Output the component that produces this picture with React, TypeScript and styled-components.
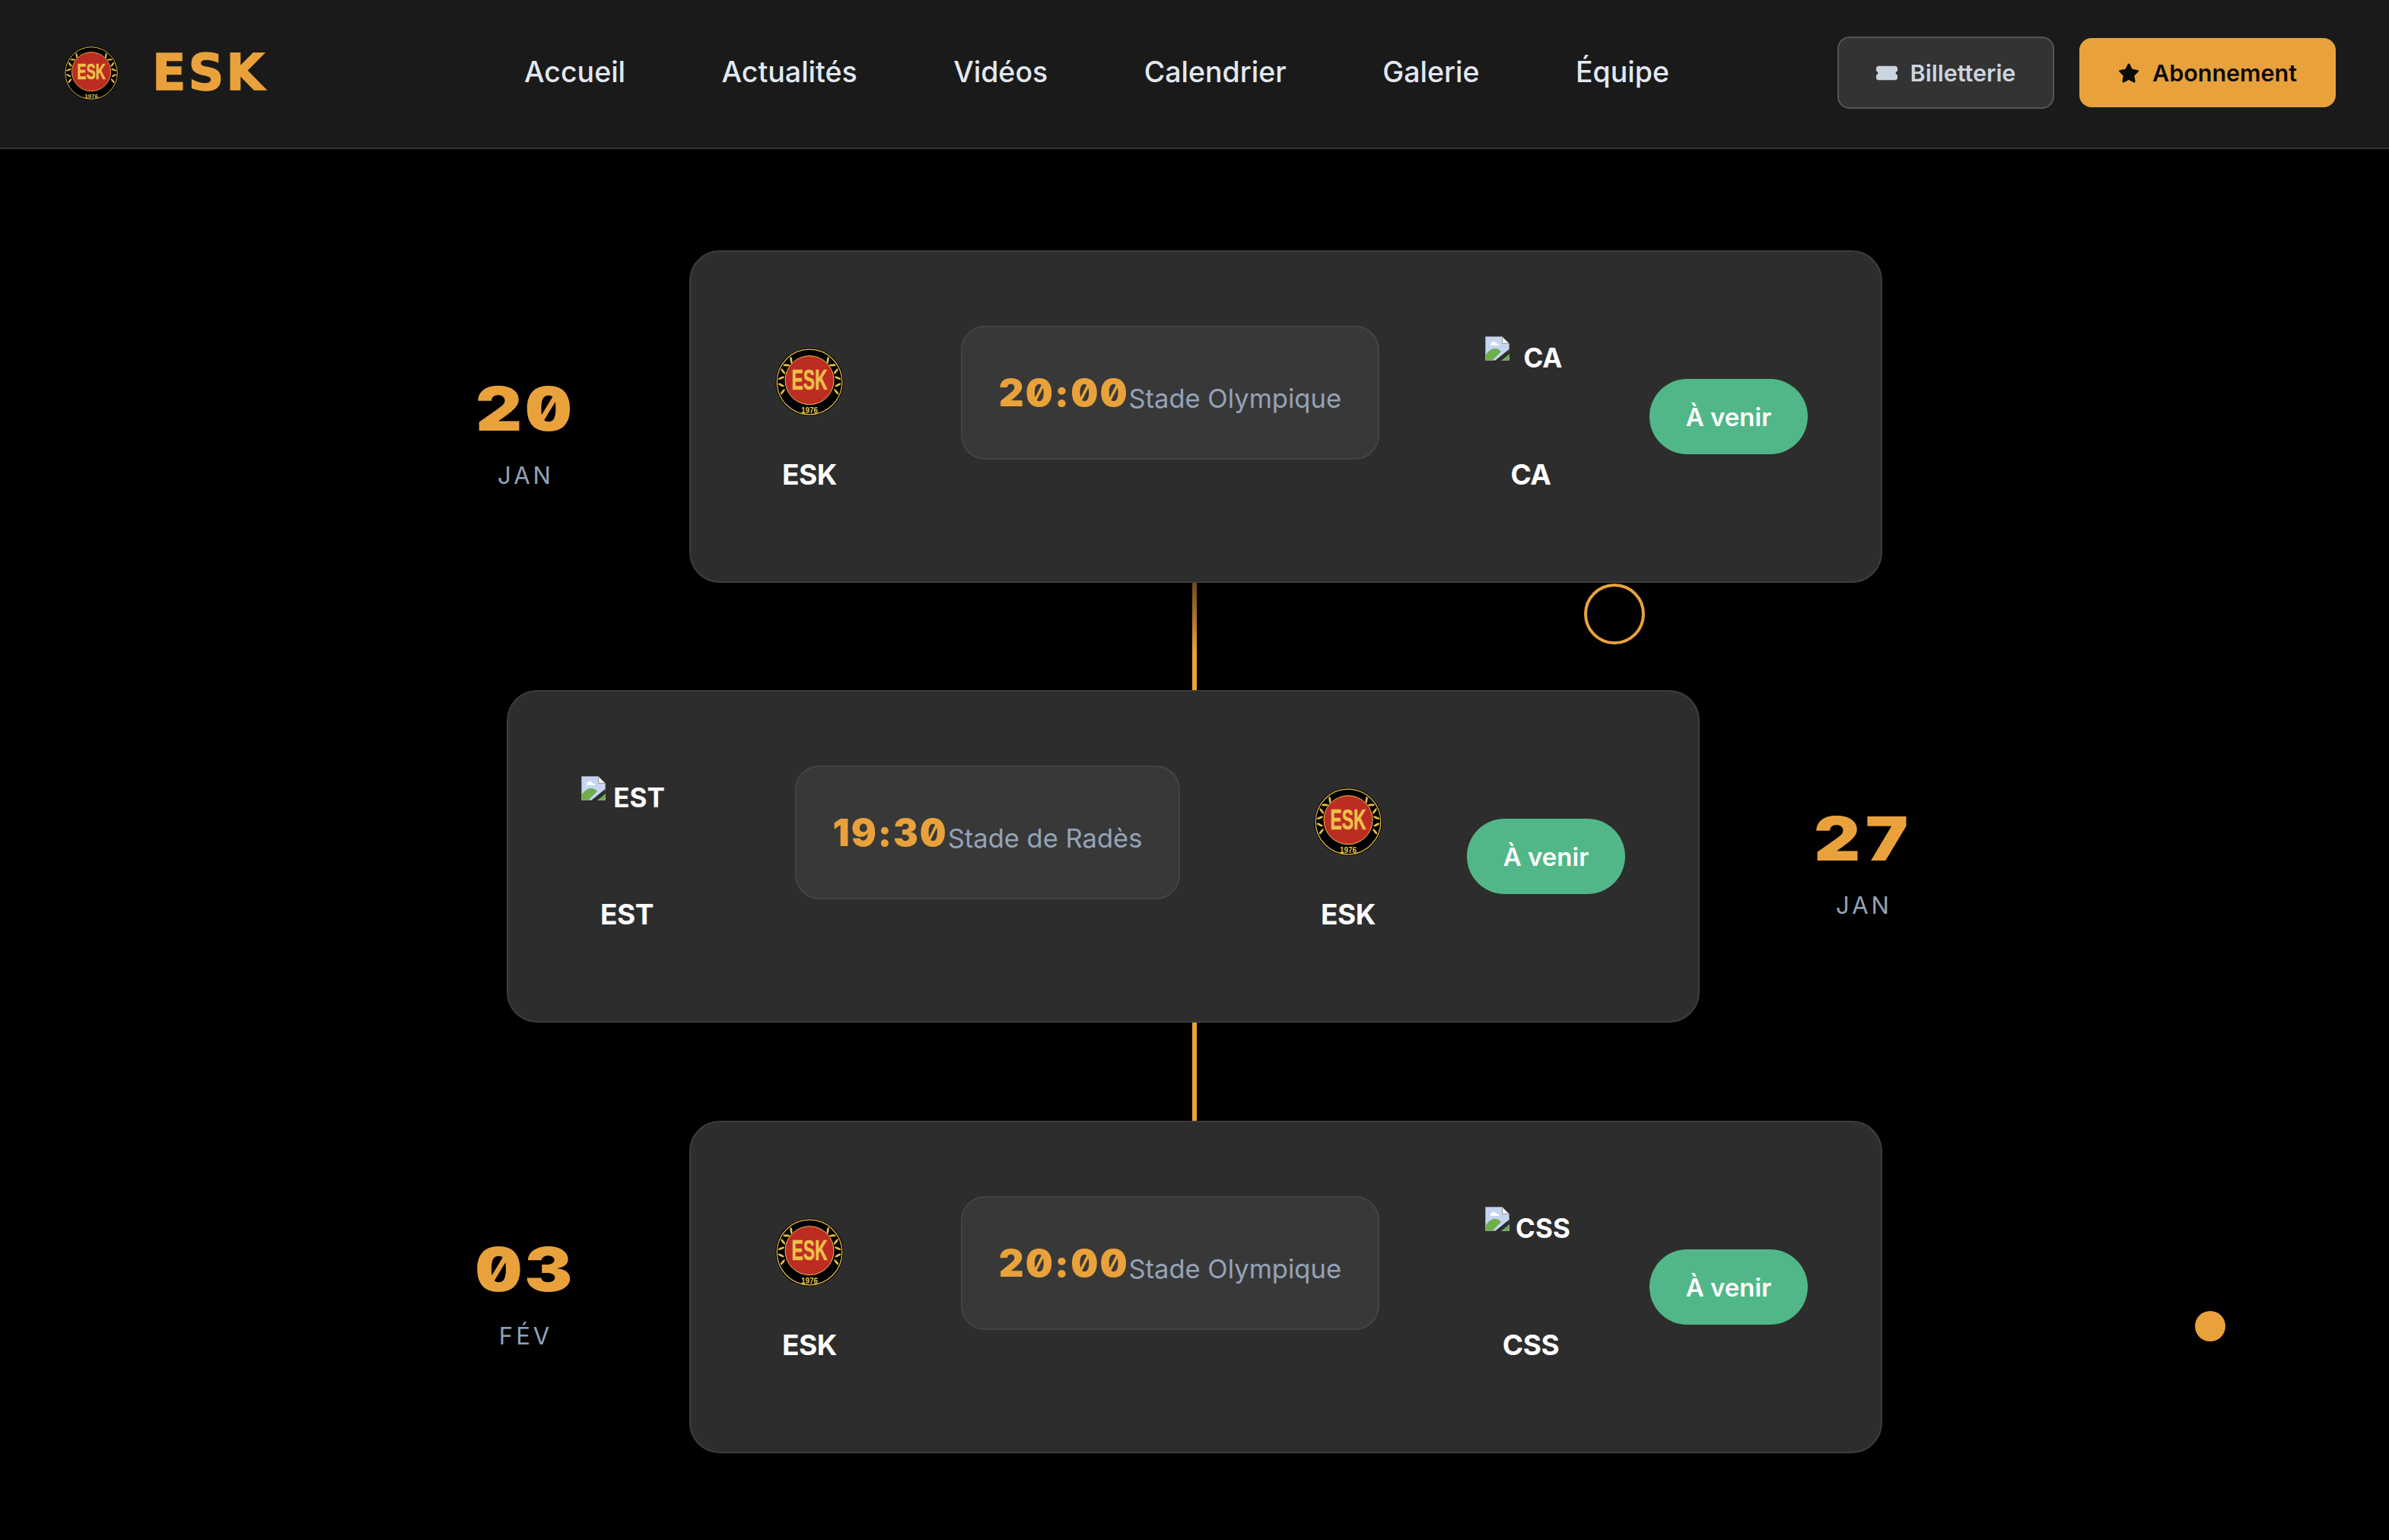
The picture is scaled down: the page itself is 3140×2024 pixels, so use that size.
import React from "react";
import styled, { createGlobalStyle } from "styled-components";
import { FaStar, FaTicketSimple } from "react-icons/fa6";

const Global = createGlobalStyle`
  html, body { margin: 0; padding: 0; background: #000; }
  body { font-family: Inter, "Noto Sans", sans-serif; }
`;

const display = `Inter, "DejaVu Sans", sans-serif`;
const gold = "#e9a23b";

const Page = styled.div`
  position: relative;
  min-height: 2024px;
  background: #000;
  overflow: hidden;
`;

const Header = styled.header`
  display: flex;
  align-items: center;
  box-sizing: border-box;
  height: 196px;
  padding: 2px 70px 5px 72px;
  background: #1a1a1a;
  border-bottom: 2px solid #333;
`;

const Brand = styled.div`
  display: flex;
  align-items: center;
  gap: 32px;
  width: 617px;
`;

const BrandName = styled.span`
  font-family: "DejaVu Sans", sans-serif;
  font-weight: 700;
  font-size: 65px;
  line-height: 1;
  letter-spacing: 3px;
  -webkit-text-stroke: 1.5px ${gold};
  color: ${gold};
`;

const Nav = styled.nav`
  display: flex;
  gap: 126.5px;
  flex: 1;
  padding-bottom: 3px;
`;

const NavLink = styled.a`
  font-size: 37.5px;
  font-weight: 500;
  color: #e2e8f0;
  white-space: nowrap;
`;

const Actions = styled.div`
  display: flex;
  align-items: center;
  gap: 33px;
`;

const Button = styled.button<{ $primary?: boolean }>`
  display: flex;
  align-items: center;
  justify-content: center;
  gap: 17px;
  box-sizing: border-box;
  font-family: inherit;
  font-size: 30.5px;
  font-weight: 600;
  border-radius: 16px;
  width: ${(p) => (p.$primary ? "337px" : "285px")};
  height: ${(p) => (p.$primary ? "91px" : "95px")};
  color: ${(p) => (p.$primary ? "#0a0a0a" : "#cbd5e1")};
  background: ${(p) => (p.$primary ? gold : "#333")};
  border: ${(p) => (p.$primary ? "none" : "2px solid #555")};
  padding: 0;
  svg { font-size: 28px; flex: none; }
`;

const Stage = styled.main`
  width: 2200px;
  margin: 0 auto;
  padding-top: 133px;
`;

const Row = styled.section<{ $even?: boolean }>`
  display: flex;
  align-items: flex-start;
  flex-direction: ${(p) => (p.$even ? "row-reverse" : "row")};
  justify-content: flex-end;
  gap: ${(p) => (p.$even ? "153px" : "152px")};
  padding: ${(p) => (p.$even ? "0 0 0 196px" : "0 196px 0 0")};
`;

const Connector = styled.div<{ $height: number; $fade?: boolean }>`
  width: 6px;
  height: ${(p) => p.$height}px;
  margin: 0 auto;
  background: ${(p) => (p.$fade ? `linear-gradient(to bottom, #6f4a1f, ${gold} 65%)` : gold)};
`;

const DateCol = styled.div<{ $top: number }>`
  width: 126px;
  flex: none;
  padding-top: ${(p) => p.$top}px;
  display: flex;
  flex-direction: column;
  align-items: center;
`;

const DateNum = styled.div`
  font-family: ${display};
  font-weight: 900;
  font-size: 80px;
  line-height: 80px;
  letter-spacing: 4px;
  color: ${gold};
  font-variant-numeric: slashed-zero;
  font-feature-settings: "zero" 1, "tnum" 1;
  transform: scaleX(1.18);
`;

const DateMonth = styled.div`
  margin-top: 28px;
  font-size: 31px;
  line-height: 40px;
  letter-spacing: 4px;
  color: #94a3b8;
`;

const Card = styled.article`
  width: 1568px;
  height: 437px;
  box-sizing: border-box;
  flex: none;
  display: flex;
  align-items: center;
  gap: 96px;
  padding: 0 96px;
  background: #2d2d2d;
  border: 2px solid #3d3d3d;
  border-radius: 40px;
`;

const Match = styled.div`
  flex: 1;
  display: flex;
  align-items: flex-start;
  justify-content: space-between;
  height: 240px;
`;

const Team = styled.div`
  width: 120px;
  padding-top: 14px;
  display: flex;
  flex-direction: column;
  align-items: center;
`;

const LogoSvg = styled.svg<{ $size: number }>`
  display: block;
  flex: none;
  width: ${(p) => p.$size}px;
  height: ${(p) => p.$size}px;
`;

const Broken = styled.div`
  width: 120px;
  height: 120px;
  display: flex;
  align-items: flex-start;
`;

const BrokenIcon = styled.svg`
  display: block;
  flex: none;
  width: 32px;
  height: 32px;
`;

const AltText = styled.span`
  flex: 1;
  text-align: center;
  font-size: 35px;
  font-weight: 700;
  line-height: 48px;
  padding-top: 4px;
  color: #fff;
`;

const TeamName = styled.div`
  margin-top: 38px;
  font-size: 37px;
  font-weight: 700;
  line-height: 48px;
  letter-spacing: -0.5px;
  color: #fff;
  white-space: nowrap;
`;

const TimeBox = styled.div`
  box-sizing: border-box;
  height: 176px;
  padding: 61px 48px 0;
  display: flex;
  align-items: baseline;
  justify-content: center;
  background: #383838;
  border: 2px solid #444;
  border-radius: 32px;
  white-space: nowrap;
`;

const Time = styled.span<{ $scale: number; $inset: number }>`
  display: inline-block;
  margin: 0 ${(p) => p.$inset}px;
  font-family: ${display};
  font-weight: 900;
  font-size: 49px;
  line-height: 56px;
  letter-spacing: 2px;
  color: ${gold};
  font-variant-numeric: slashed-zero;
  font-feature-settings: "zero" 1;
  transform: translateY(-2px) scaleX(${(p) => p.$scale});
`;

const Venue = styled.span`
  font-size: 34.5px;
  line-height: 50px;
  color: #94a3b8;
`;

const Status = styled.div`
  flex: none;
  box-sizing: border-box;
  width: 208px;
  height: 99px;
  display: flex;
  align-items: center;
  justify-content: center;
  border-radius: 50px;
  background: #52b788;
  color: #fff;
  font-size: 33px;
  font-weight: 600;
`;

const Ring = styled.div`
  position: absolute;
  left: 2082px;
  top: 767px;
  width: 80px;
  height: 80px;
  box-sizing: border-box;
  border: 4px solid ${gold};
  border-radius: 50%;
`;

const Dot = styled.div`
  position: absolute;
  left: 2885px;
  top: 1723px;
  width: 40px;
  height: 40px;
  border-radius: 50%;
  background: ${gold};
`;

const leaves = [0, 1, 2, 3, 4, 5];

function Logo({ size }: { size: number }) {
  return (
    <LogoSvg $size={size} viewBox="0 0 120 120">
      <circle cx="60" cy="60" r="44.5" fill="#000" />
      <circle cx="60" cy="60" r="42.8" fill="none" stroke="#e8c24a" strokeWidth="1.2" />
      {leaves.map((i) => {
        const a = 20 - i * 14;
        return (
          <g key={i}>
            <ellipse rx="1.4" ry="4.4" fill="#e8c24a"
              transform={`translate(60 60) rotate(${-90 - a}) translate(0 -37.5) rotate(${i % 2 ? 32 : -32})`} />
            <ellipse rx="1.4" ry="4.4" fill="#e8c24a"
              transform={`translate(60 60) rotate(${90 + a}) translate(0 -37.5) rotate(${i % 2 ? -32 : 32})`} />
          </g>
        );
      })}
      <circle cx="60" cy="57.7" r="32" fill="#bd2c22" stroke="#e8c24a" strokeWidth="1" />
      <text x="60" y="69.5" textAnchor="middle" textLength="47" lengthAdjust="spacingAndGlyphs"
        fontFamily="'Liberation Sans Narrow','Liberation Sans',sans-serif" fontWeight="700" fontSize="36" stroke="#ecc04a" strokeWidth="0.6" fill="#ecc04a">ESK</text>
      <text x="60" y="100.8" textAnchor="middle" textLength="22" lengthAdjust="spacingAndGlyphs"
        fontFamily="'Liberation Sans',sans-serif" fontWeight="700" fontSize="10" fill="#e8c24a">1976</text>
    </LogoSvg>
  );
}

function BrokenImage({ alt }: { alt: string }) {
  return (
    <Broken>
      <BrokenIcon viewBox="0 0 32 32">
        <path d="M.5.5h22l9 9v22H.5z" fill="#c6d5f2" stroke="#9a9a9a" strokeWidth="1" />
        <path d="M22.5.5v9h9z" fill="#f4f4f4" stroke="#9a9a9a" strokeWidth="1" />
        <path d="M7 11c0-2.500 2-4 4.500-4 2 0 3.300 1 4 2.500 2 0 3 1 3 2.500H7z" fill="#fff" />
        <path d="M1 31V24c4-6 9-8.500 13-8 4 .5 6 3 7 4l-11 11z" fill="#6eae4b" />
        <path d="M24 25l7-1v7h-12z" fill="#6eae4b" />
        <path d="M31.500 17L13 32h8L32 23z" fill="#2d2d2d" />
      </BrokenIcon>
      <AltText>{alt}</AltText>
    </Broken>
  );
}

function TeamBlock({ code }: { code: string }) {
  return (
    <Team>
      {code === "ESK" ? <Logo size={120} /> : <BrokenImage alt={code} />}
      <TeamName>{code}</TeamName>
    </Team>
  );
}

const matches = [
  { day: "20", month: "JAN", home: "ESK", away: "CA", time: "20:00", venue: "Stade Olympique", top: 168, after: 141, scale: 1.04, inset: 3 },
  { day: "27", month: "JAN", home: "EST", away: "ESK", time: "19:30", venue: "Stade de Radès", top: 155, after: 129, scale: 1, inset: 0 },
  { day: "03", month: "FÉV", home: "ESK", away: "CSS", time: "20:00", venue: "Stade Olympique", top: 155, after: 0, scale: 1.04, inset: 3 },
];

export default function App() {
  return (
    <Page>
      <Global />
      <Header>
        <Brand>
          <Logo size={96} />
          <BrandName>ESK</BrandName>
        </Brand>
        <Nav>
          {["Accueil", "Actualités", "Vidéos", "Calendrier", "Galerie", "Équipe"].map((n) => (
            <NavLink key={n}>{n}</NavLink>
          ))}
        </Nav>
        <Actions>
          <Button><FaTicketSimple />Billetterie</Button>
          <Button $primary><FaStar />Abonnement</Button>
        </Actions>
      </Header>
      <Stage>
        {matches.map((m, i) => (
          <React.Fragment key={m.day}>
            <Row $even={i % 2 === 1}>
              <DateCol $top={m.top}>
                <DateNum>{m.day}</DateNum>
                <DateMonth>{m.month}</DateMonth>
              </DateCol>
              <Card>
                <Match>
                  <TeamBlock code={m.home} />
                  <TimeBox>
                    <Time $scale={m.scale} $inset={m.inset}>{m.time}</Time>
                    <Venue>{m.venue}</Venue>
                  </TimeBox>
                  <TeamBlock code={m.away} />
                </Match>
                <Status>À venir</Status>
              </Card>
            </Row>
            {m.after > 0 && <Connector $height={m.after} $fade={i === 0} />}
          </React.Fragment>
        ))}
      </Stage>
      <Ring />
      <Dot />
    </Page>
  );
}
